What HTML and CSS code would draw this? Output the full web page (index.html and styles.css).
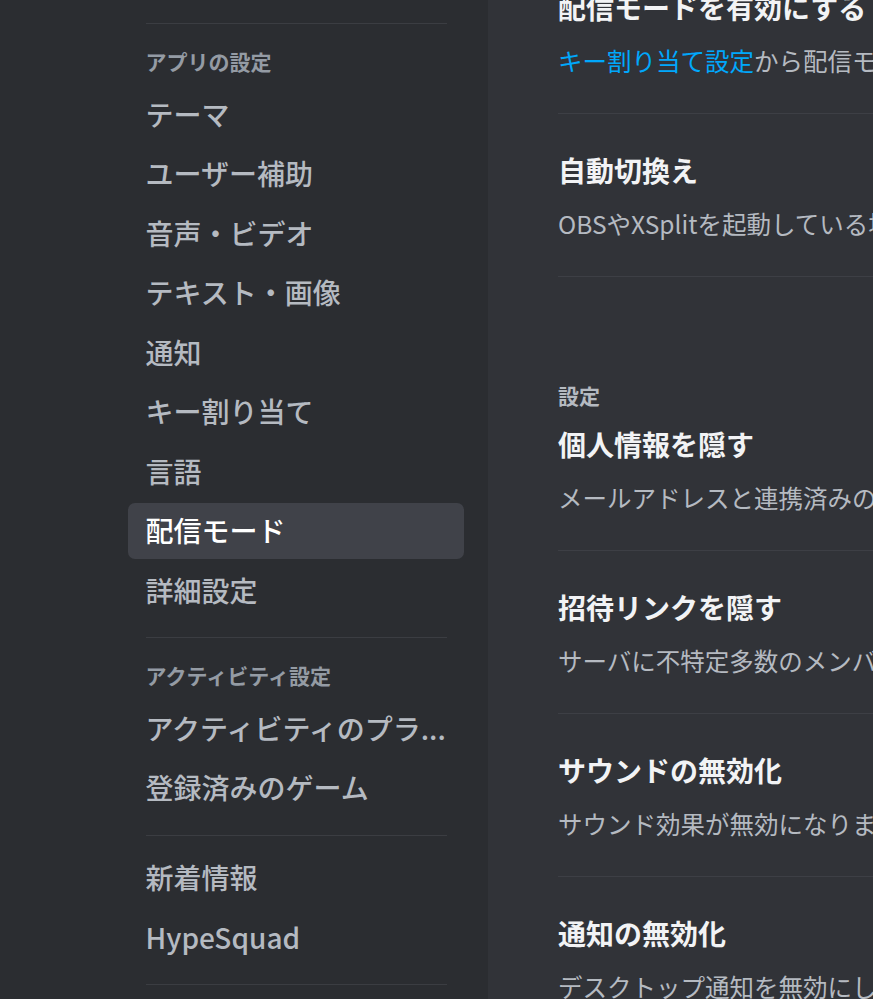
FILE: index.html
```
<!DOCTYPE html>
<html lang="ja">

<head>
    <meta charset="UTF-8">
    <meta name="viewport" content="width=device-width, initial-scale=1.0">
    <title>配信モード</title>
    <link rel="stylesheet" href="styles.css">
</head>

<body>
    <div class="layout">
        <div class="sidebar">
            <div class="nav">
                <div class="separator"></div>
                <div class="nav-header">アプリの設定</div>
                <div class="nav-item">テーマ</div>
                <div class="nav-item">ユーザー補助</div>
                <div class="nav-item">音声・ビデオ</div>
                <div class="nav-item">テキスト・画像</div>
                <div class="nav-item">通知</div>
                <div class="nav-item">キー割り当て</div>
                <div class="nav-item">言語</div>
                <div class="nav-item active">配信モード</div>
                <div class="nav-item">詳細設定</div>
                <div class="separator"></div>
                <div class="nav-header">アクティビティ設定</div>
                <div class="nav-item">アクティビティのプラ...</div>
                <div class="nav-item">登録済みのゲーム</div>
                <div class="separator"></div>
                <div class="nav-item">新着情報</div>
                <div class="nav-item">HypeSquad</div>
                <div class="separator"></div>
            </div>
        </div>

        <div class="main">
            <div class="content">
                <div class="section">
                    <div class="row">
                        <div class="row-title">配信モードを有効にする</div>
                        <div class="row-desc"><a class="link" href="#">キー割り当て設定</a>から配信モードを切り替えるキー割り当てを設定できます。</div>
                    </div>
                    <div class="row">
                        <div class="row-title">自動切換え</div>
                        <div class="row-desc">OBSやXSplitを起動している場合、自動的に配信モードを有効/無効にします。</div>
                    </div>
                </div>

                <div class="section section-gap">
                    <div class="section-header">設定</div>
                    <div class="row">
                        <div class="row-title">個人情報を隠す</div>
                        <div class="row-desc">メールアドレスと連携済みのアカウント、メモ、個人情報を隠します。</div>
                    </div>
                    <div class="row">
                        <div class="row-title">招待リンクを隠す</div>
                        <div class="row-desc">サーバに不特定多数のメンバーを参加させたくない場合にお勧めします。</div>
                    </div>
                    <div class="row">
                        <div class="row-title">サウンドの無効化</div>
                        <div class="row-desc">サウンド効果が無効になります。</div>
                    </div>
                    <div class="row">
                        <div class="row-title">通知の無効化</div>
                        <div class="row-desc">デスクトップ通知を無効にします。</div>
                    </div>
                </div>
            </div>
        </div>
    </div>
</body>

</html>
```

FILE: styles.css
```
html , body {
    margin: 0;
    padding: 0;
    width: 100%;
    height: 100%;
    overflow: hidden;
}
body {
    font-family: "Noto Sans CJK JP", "Noto Sans", sans-serif;
    background-color: #313338;
}
.layout {
    display: flex;
    width: 100%;
    height: 100%;
}

/* 左側メニュー */
.sidebar {
    flex: 0 0 488px;
    display: flex;
    justify-content: flex-end;
    box-sizing: border-box;
    padding: 4px 24px 0 0;
    background-color: #2b2d31;
}
.nav {
    width: 336px;
}
.separator {
    height: 1px;
    margin: 19px 17.5px 14px;
    background-color: #3b3d42;
}
.nav-header {
    padding: 9px 17.5px 11px;
    font-size: 21px;
    line-height: 28px;
    font-weight: 700;
    color: #949ba4;
}
.nav-item {
    padding: 10.5px 17.5px;
    margin-bottom: 3.5px;
    font-size: 28px;
    line-height: 35px;
    font-weight: 500;
    color: #b5bac1;
    border-radius: 7px;
    white-space: nowrap;
}
.nav-item.active {
    background-color: #404249;
    color: #ffffff;
}

/* 右側コンテンツ */
.main {
    flex: 1;
    overflow: hidden;
}
.content {
    width: 1300px;
    margin-top: -14px;
    padding-left: 70px;
}
.section-gap {
    margin-top: 104px;
}
.section-header {
    font-size: 21px;
    line-height: 28px;
    font-weight: 700;
    color: #b5bac1;
    margin-bottom: 14px;
}
.row {
    padding-bottom: 35px;
    margin-bottom: 35px;
    border-bottom: 1px solid #3d3f45;
}
.row-title {
    font-size: 28px;
    line-height: 42px;
    font-weight: 700;
    color: #f2f3f5;
    white-space: nowrap;
}
.row-desc {
    margin-top: 15px;
    font-size: 24.5px;
    line-height: 35px;
    color: #b5bac1;
    white-space: nowrap;
}
.link {
    color: #00a8fc;
    text-decoration: none;
}
```
